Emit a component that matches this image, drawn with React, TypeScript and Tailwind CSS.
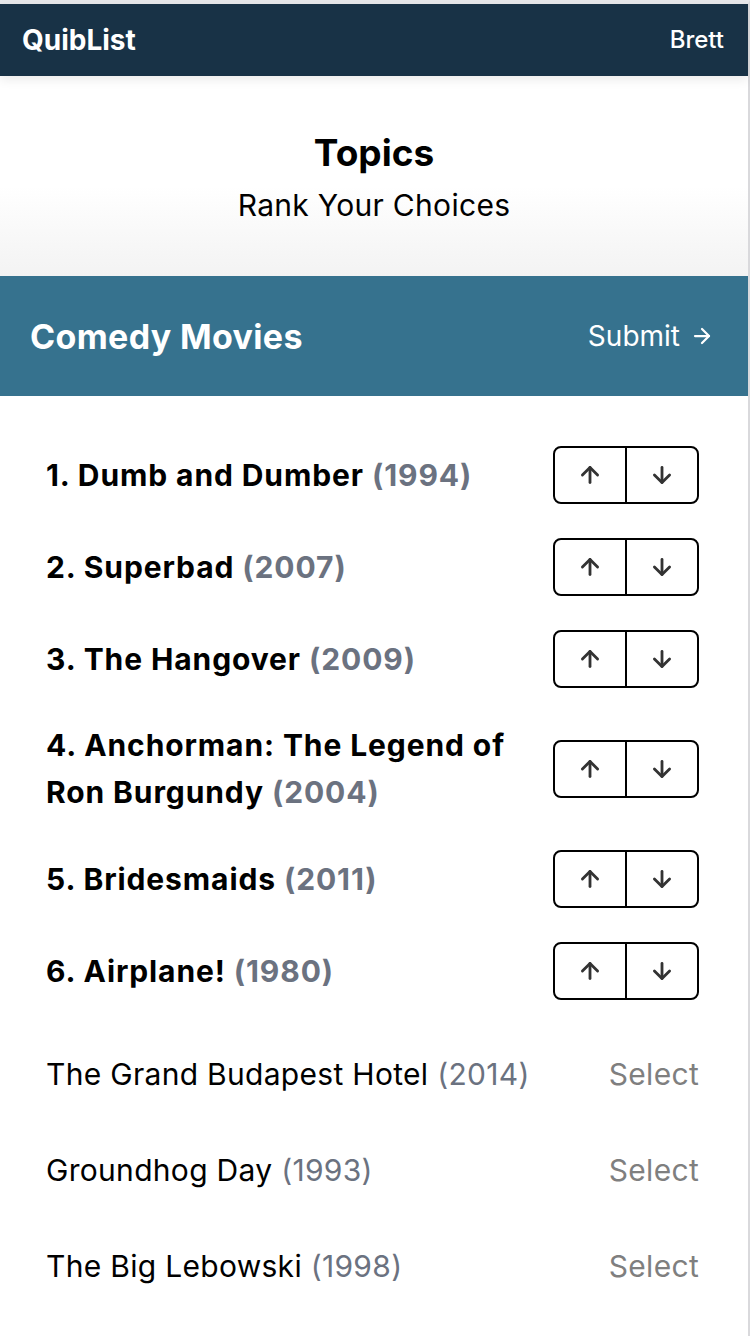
import { ArrowUp, ArrowDown, ArrowRight } from "lucide-react";

type Movie = { title: string; year: number };

const ranked: Movie[] = [
  { title: "Dumb and Dumber", year: 1994 },
  { title: "Superbad", year: 2007 },
  { title: "The Hangover", year: 2009 },
  { title: "Anchorman: The Legend of Ron Burgundy", year: 2004 },
  { title: "Bridesmaids", year: 2011 },
  { title: "Airplane!", year: 1980 },
];

const others: Movie[] = [
  { title: "The Grand Budapest Hotel", year: 2014 },
  { title: "Groundhog Day", year: 1993 },
  { title: "The Big Lebowski", year: 1998 },
];

function RankButtons() {
  return (
    <div className="flex shrink-0 w-[146px] h-[58px] border-2 border-black rounded-[8px] overflow-hidden">
      <button className="flex-1 flex items-center justify-center border-r-2 border-black text-[#333]">
        <ArrowUp size={26} strokeWidth={2.6} />
      </button>
      <button className="flex-1 flex items-center justify-center text-[#333]">
        <ArrowDown size={26} strokeWidth={2.6} />
      </button>
    </div>
  );
}

export default function App() {
  return (
    <div className="w-[750px] min-h-screen bg-white border-t-4 border-t-[#e6e7ea] border-r-2 border-r-[#d9d9dc] font-['Inter',sans-serif]">
      <header className="relative z-10 h-[72px] bg-[#183246] flex items-center justify-between pl-[22px] pr-[24px] shadow-[0_4px_10px_rgba(0,0,0,0.08)]">
        <span className="text-white text-[28px] font-bold">QuibList</span>
        <span className="text-white text-[24px] font-medium">Brett</span>
      </header>

      <section className="h-[200px] flex flex-col items-center pt-[52px] bg-gradient-to-b from-white from-55% to-[#f3f3f3]">
        <h1 className="text-[37px] leading-[50px] font-bold text-black">Topics</h1>
        <p className="mt-[5px] text-[30px] leading-[44px] tracking-[0.01em] text-black">Rank Your Choices</p>
      </section>

      <section className="h-[120px] bg-[#36728e] flex items-center justify-between pl-[30px] pr-[34px]">
        <h2 className="text-white text-[34px] font-bold tracking-[0.01em]">Comedy Movies</h2>
        <button className="flex items-center gap-[10px] text-white text-[28px]">
          Submit
          <ArrowRight size={24} strokeWidth={2.25} />
        </button>
      </section>

      <div className="pt-[50px] pl-[46px] pr-[49px] pb-[40px]">
        <ol className="flex flex-col gap-[34px]">
          {ranked.map((m, i) => (
            <li key={m.title} className="flex items-center justify-between gap-[28px]">
              <p className="text-[30px] leading-[47px] font-bold tracking-[0.03em] text-black">
                {i + 1}. {m.title} <span className="text-[#6b7280]">({m.year})</span>
              </p>
              <RankButtons />
            </li>
          ))}
        </ol>

        <ul className="mt-[53px] flex flex-col gap-[54px]">
          {others.map((m) => (
            <li key={m.title} className="flex items-center justify-between">
              <p className="text-[30px] leading-[42px] tracking-[0.01em] text-black">
                {m.title} <span className="text-[#6b7280]">({m.year})</span>
              </p>
              <button className="text-[30px] leading-[42px] tracking-[0.01em] text-[#7f7f7f]">Select</button>
            </li>
          ))}
        </ul>
      </div>
    </div>
  );
}
